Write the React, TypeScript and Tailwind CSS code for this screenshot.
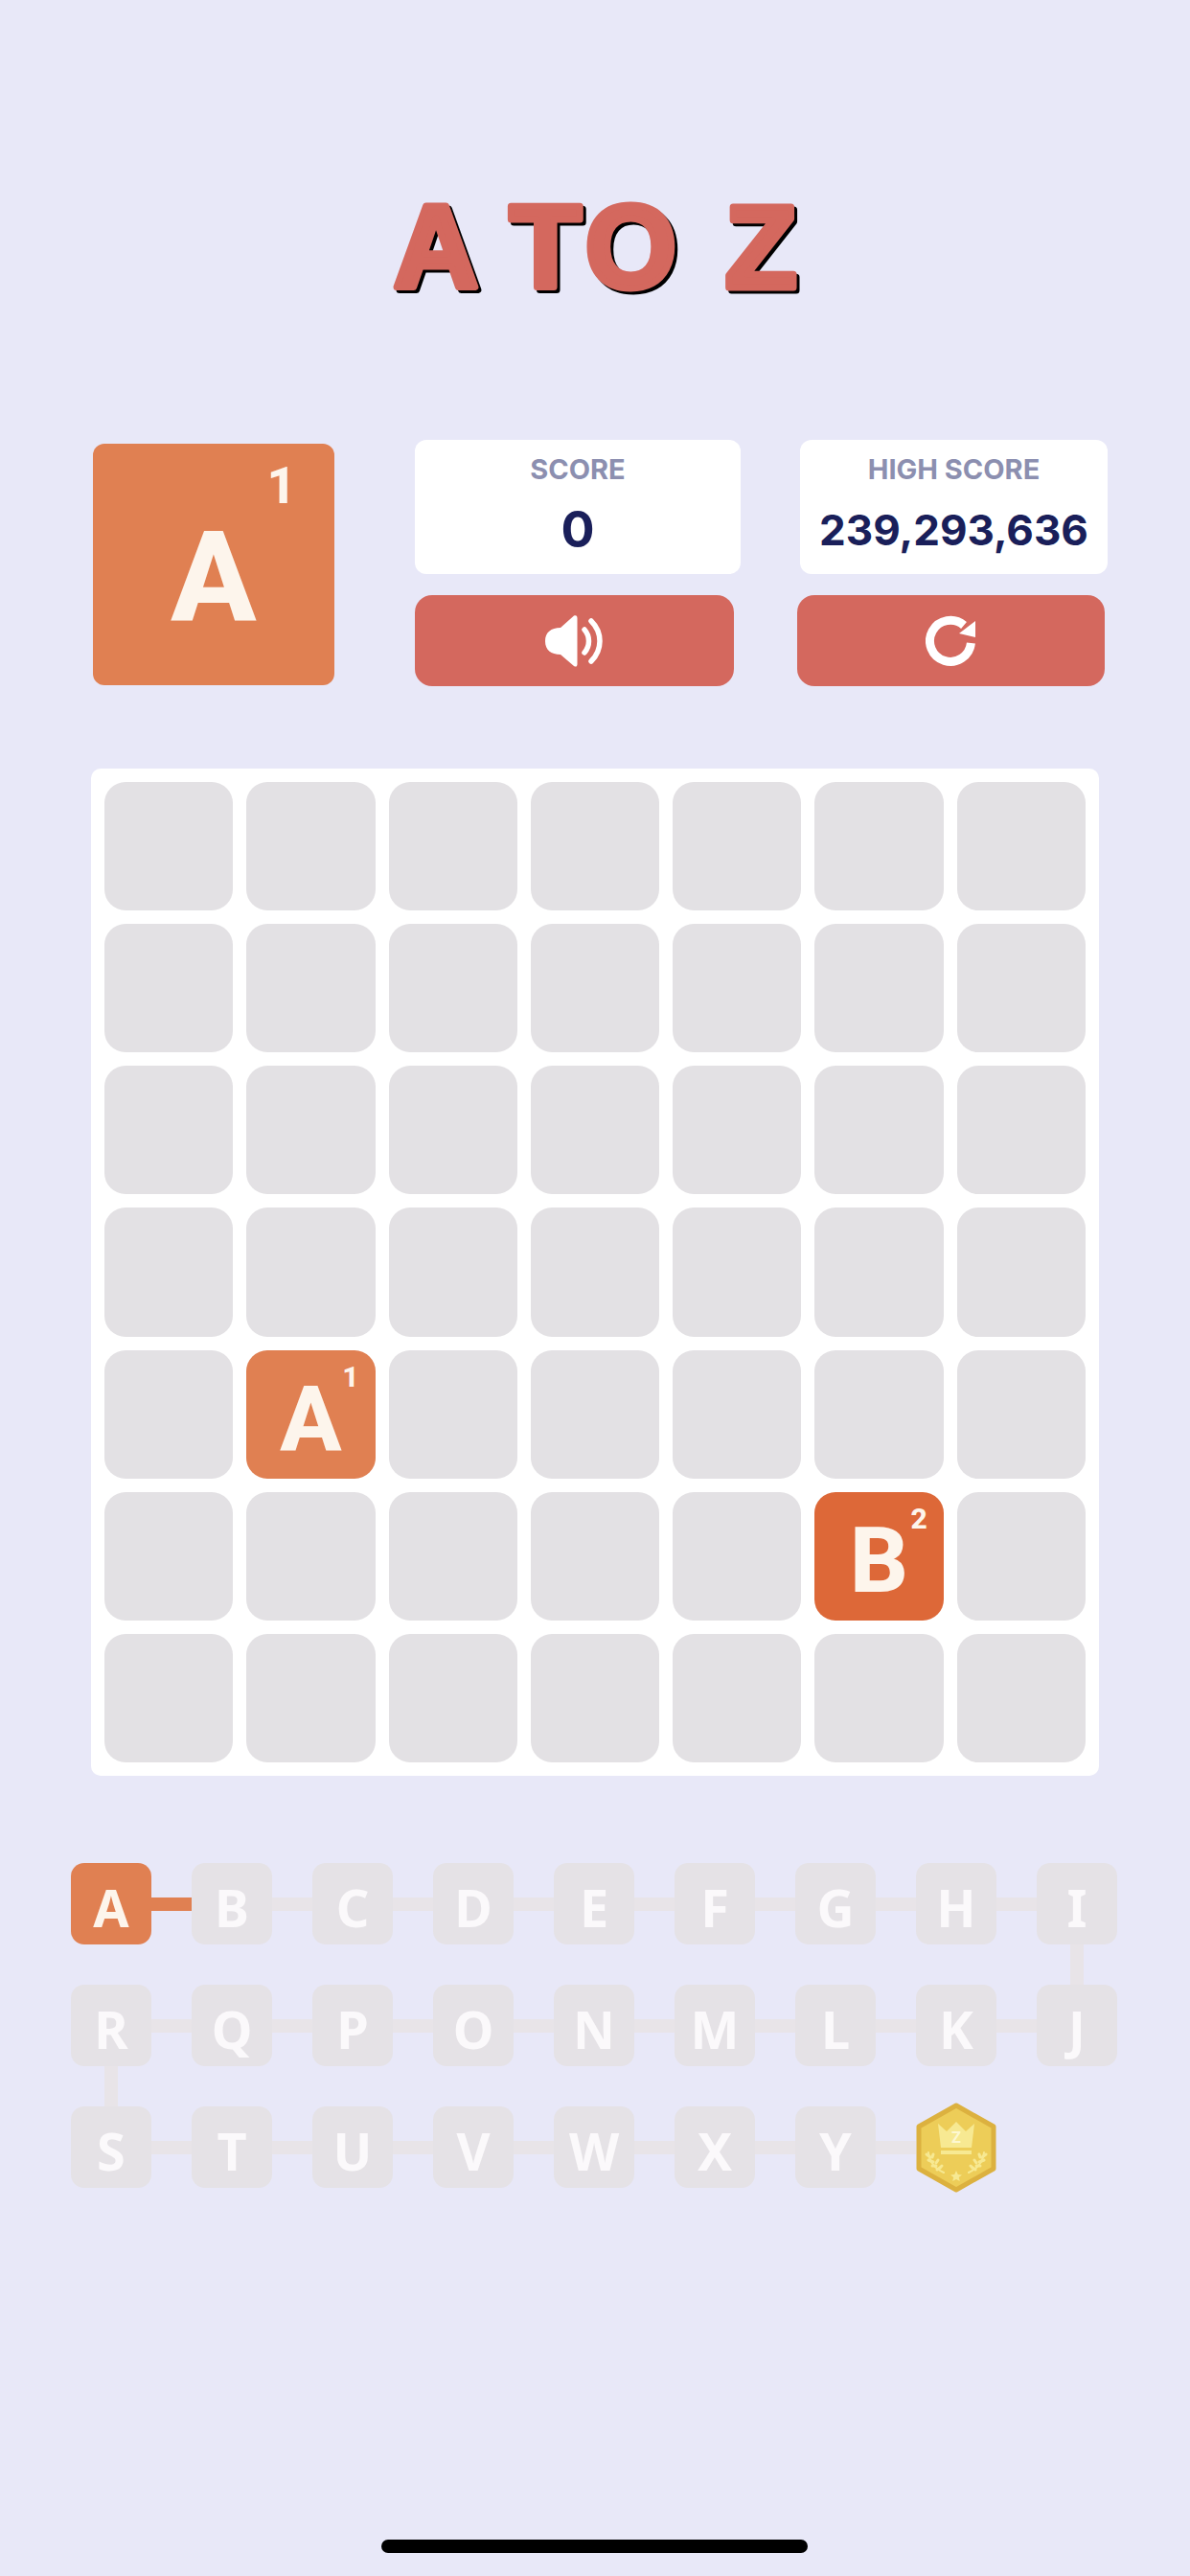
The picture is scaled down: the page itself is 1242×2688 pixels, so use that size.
import { Fragment } from "react";

const CELL_COUNT = 49;
const tiles: Record<number, { letter: string; value: number; color: string }> = {
  29: { letter: "A", value: 1, color: "bg-[#e08052]" },
  40: { letter: "B", value: 2, color: "bg-[#dd6838]" },
};

const rows = [
  ["A", "B", "C", "D", "E", "F", "G", "H", "I"],
  ["R", "Q", "P", "O", "N", "M", "L", "K", "J"],
  ["S", "T", "U", "V", "W", "X", "Y"],
];

function SoundIcon() {
  return (
    <svg width="62" height="54" viewBox="0 0 62 54" fill="none">
      <path d="M30 0.5 C32.5 -0.5 33.5 1 33.5 3 V51 C33.5 53 32.5 54.5 30 53 L16 41 C6 41 0 36 0 27 C0 18 6 13 16 13 Z" fill="#fff" />
      <path d="M41 15 C47 22 47 32 41 39" stroke="#fff" strokeWidth="5.5" strokeLinecap="round" />
      <path d="M48 6 C60 18 60 36 48 48" stroke="#fff" strokeWidth="5.5" strokeLinecap="round" />
    </svg>
  );
}

function RestartIcon() {
  return (
    <svg width="54" height="54" viewBox="0 0 54 54" fill="none">
      <path d="M40 10.5 A21.5 21.5 0 1 0 47.4 29" stroke="#fff" strokeWidth="9" />
      <path d="M52 6 V23 L35 19 Z" fill="#fff" />
    </svg>
  );
}

function Laurel({ flip }: { flip?: boolean }) {
  return (
    <g transform={flip ? "matrix(-1 0 0 1 84 0)" : undefined} stroke="#f7e992" strokeLinecap="round" fill="none">
      <path d="M13 52 C14 62 20 69 29 73" strokeWidth="2" />
      <path d="M11 54 L15 57 M13 60 L18 62 M17 66 L21 66 M22 70 L25 68" strokeWidth="3" />
      <path d="M18 54 L17 57 M23 60 L21 63 M27 66 L25 68" strokeWidth="3" />
    </g>
  );
}

function Medal() {
  return (
    <svg width="84" height="94" viewBox="0 0 84 94" className="block">
      <path d="M42 3 L81 25 V69 L42 91 L3 69 V25 Z" fill="#edcd58" stroke="#dcb13f" strokeWidth="5" strokeLinejoin="round" />
      <path d="M23 22 L32 30 L42 20 L52 30 L61 22 L58 47 H26 Z" fill="#f7e992" />
      <text x="42" y="42" textAnchor="middle" fontSize="16" fontWeight="700" fontFamily="Inter, sans-serif" fill="#fdf8d0">Z</text>
      <rect x="26" y="50" width="32" height="4" fill="#f7e992" />
      <Laurel />
      <Laurel flip />
      <path d="M42 71 L43.8 75 L48 75.4 L44.8 78 L45.8 82 L42 80 L38.2 82 L39.2 78 L36 75.4 L40.2 75 Z" fill="#f7e992" />
    </svg>
  );
}

function ChainCell({ letter, row, col }: { letter: string; row: number; col: number }) {
  const active = letter === "A";
  const hasLink = col < 8 && !(row === 2 && col > 6);
  return (
    <div className="relative">
      {hasLink && (
        <div
          className={`absolute left-[84px] top-[36px] h-[14px] w-[42px] ${
            active ? "bg-[#e08052]" : "bg-[#e8e4e8]"
          }`}
        />
      )}
      {(letter === "I" || letter === "R") && (
        <div className="absolute left-[35px] top-[85px] h-[42px] w-[14px] bg-[#e8e4e8]" />
      )}
      <div
        className={`flex h-[85px] w-[84px] items-center justify-center rounded-[14px] font-['Noto_Sans',sans-serif] text-[54px] font-bold ${
          active ? "bg-[#e08052] text-[#fdf5ec]" : "bg-[#e5e2e6] text-[#fbf9fb]"
        }`}
      >
        <span className="relative top-[3px] leading-none">{letter}</span>
      </div>
    </div>
  );
}

function Title() {
  const glyphs = [
    { ch: "A", x: 50 },
    { ch: "T", x: 171 },
    { ch: "O", x: 250 },
    { ch: "Z", x: 396 },
  ];
  return (
    <svg width="520" height="130" viewBox="0 0 520 130" className="block">
      <text y="110" fontFamily="'Liberation Sans', sans-serif" fontWeight="700" fontSize="122" fill="#000" stroke="#000" strokeWidth="7" strokeLinejoin="round" transform="translate(3 3)">
        {glyphs.map((g) => (
          <tspan key={g.ch} x={g.x}>{g.ch}</tspan>
        ))}
      </text>
      <text y="110" fontFamily="'Liberation Sans', sans-serif" fontWeight="700" fontSize="122" fill="#d4685e" stroke="#d4685e" strokeWidth="7" strokeLinejoin="round">
        {glyphs.map((g) => (
          <tspan key={g.ch} x={g.x}>{g.ch}</tspan>
        ))}
      </text>
    </svg>
  );
}

export default function App() {
  return (
    <div className="relative h-[2688px] w-[1242px] overflow-hidden bg-[#e8e8f8] font-['Inter',sans-serif]">
      <h1 className="flex justify-center pt-[190px]">
        <Title />
      </h1>

      <div className="mt-[139px] flex pl-[97px]">
        <div className="relative mt-[4px] flex h-[252px] w-[252px] items-center justify-center rounded-[12px] bg-[#e08052] font-['Roboto',sans-serif] font-extrabold text-[#fdf5ec]">
          <span className="relative top-[14px] text-[132px] leading-none">A</span>
          <span className="absolute right-[40px] top-[18px] text-[53px] leading-none">1</span>
        </div>
        <div className="ml-[84px] flex w-[340px] flex-col gap-[22px]">
          <div className="flex h-[140px] flex-col items-center rounded-[12px] bg-white pt-[13px]">
            <span className="text-[29px] font-bold leading-[36px] text-[#8c8fb0]">SCORE</span>
            <span className="mt-[15px] text-[52px] font-bold leading-[60px] text-[#1a1f5a]">0</span>
          </div>
          <button className="flex h-[95px] w-[333px] items-center justify-center rounded-[18px] bg-[#d4685e]">
            <SoundIcon />
          </button>
        </div>
        <div className="ml-[62px] flex w-[321px] flex-col gap-[22px]">
          <div className="flex h-[140px] flex-col items-center rounded-[12px] bg-white pt-[13px]">
            <span className="text-[29px] font-bold leading-[36px] text-[#8c8fb0]">HIGH SCORE</span>
            <span className="mt-[15px] text-[44px] font-bold leading-[60px] text-[#1a1f5a]">239,293,636</span>
          </div>
          <button className="-ml-[3px] flex h-[95px] w-[321px] items-center justify-center rounded-[18px] bg-[#d4685e]">
            <RestartIcon />
          </button>
        </div>
      </div>

      <div className="ml-[95px] mt-[86px] grid h-[1051px] w-[1052px] grid-cols-7 grid-rows-7 gap-[14px] rounded-[10px] bg-white p-[14px]">
        {Array.from({ length: CELL_COUNT }).map((_, i) => {
          const tile = tiles[i];
          if (!tile) return <div key={i} className="rounded-[22px] bg-[#e3e1e4]" />;
          return (
            <div
              key={i}
              className={`relative flex items-center justify-center rounded-[22px] font-['Roboto',sans-serif] font-extrabold text-[#fdf5ec] ${tile.color}`}
            >
              <span className="relative top-[5px] text-[95px] leading-none">{tile.letter}</span>
              <span className="absolute right-[17px] top-[13px] text-[30px] leading-none">{tile.value}</span>
            </div>
          );
        })}
      </div>

      <div className="ml-[74px] mt-[91px] grid grid-cols-[repeat(9,84px)] gap-x-[42px] gap-y-[42px]">
        {rows.map((row, r) => (
          <Fragment key={r}>
            {row.map((letter, c) => (
              <ChainCell key={letter} letter={letter} row={r} col={c} />
            ))}
          </Fragment>
        ))}
        <div className="relative -mt-[4px]">
          <Medal />
        </div>
      </div>

      <div className="absolute bottom-[24px] left-[398px] h-[14px] w-[445px] rounded-[7px] bg-black" />
    </div>
  );
}
